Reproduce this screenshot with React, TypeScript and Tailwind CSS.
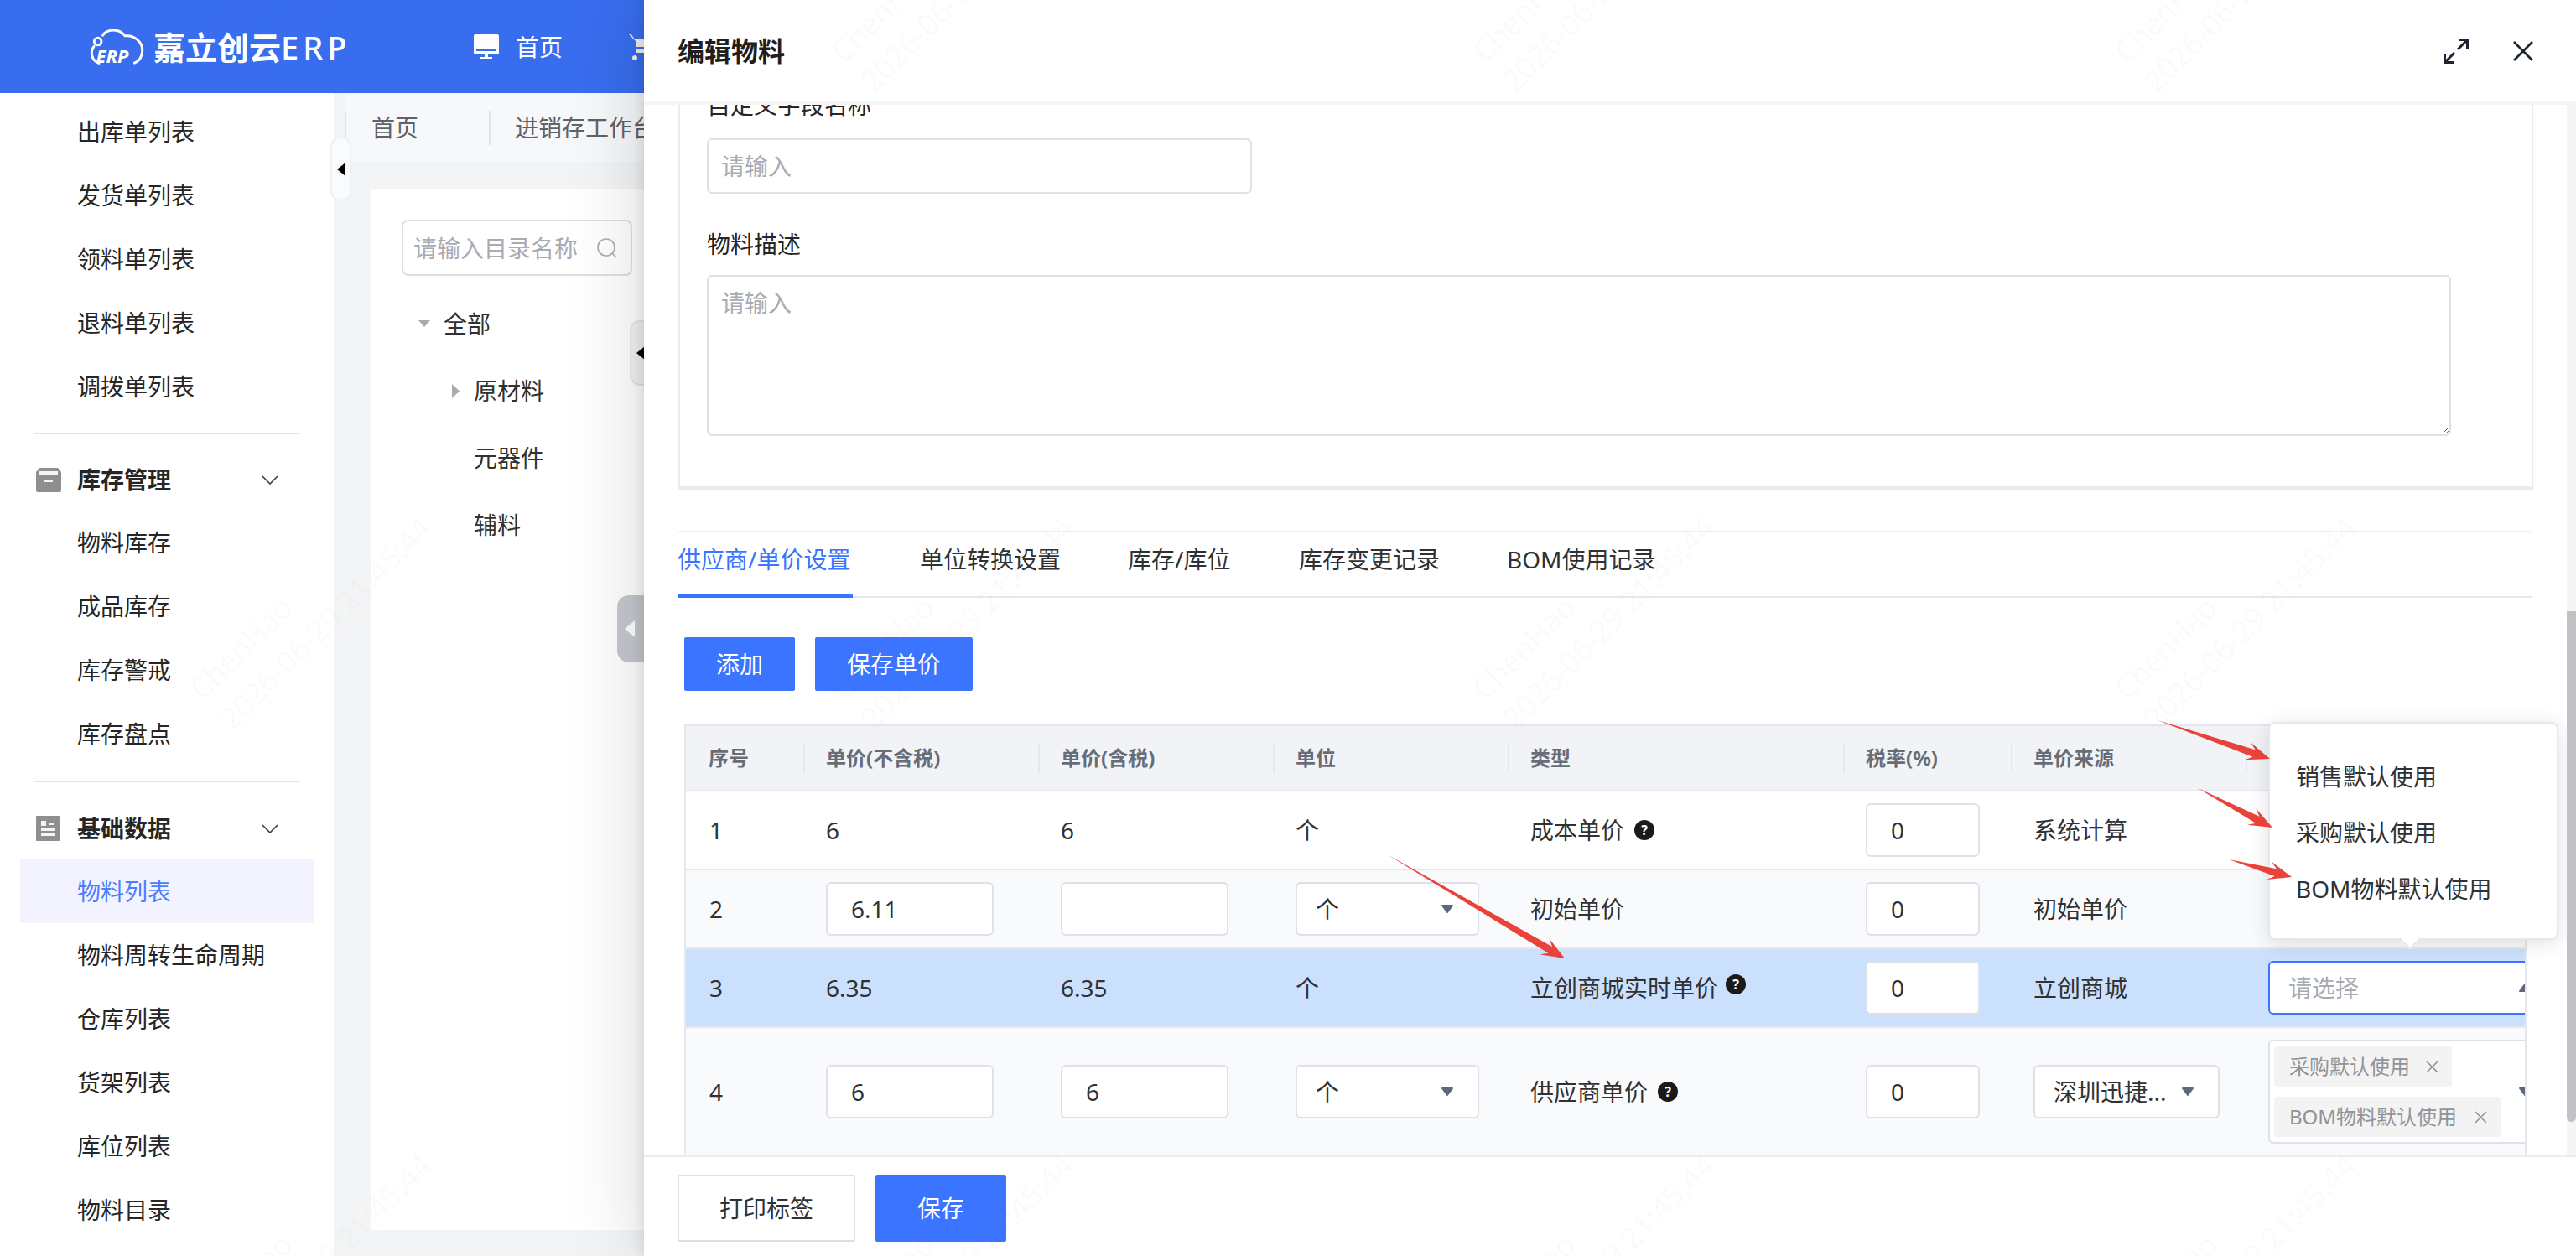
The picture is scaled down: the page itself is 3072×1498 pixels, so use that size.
import React from 'react';

const topItems = ['出库单列表', '发货单列表', '领料单列表', '退料单列表', '调拨单列表'];
const stockItems = ['物料库存', '成品库存', '库存警戒', '库存盘点'];
const baseItems = ['物料列表', '物料周转生命周期', '仓库列表', '货架列表', '库位列表', '物料目录'];
const tabs = ['供应商/单价设置', '单位转换设置', '库存/库位', '库存变更记录', 'BOM使用记录'];
const heads = ['序号', '单价(不含税)', '单价(含税)', '单位', '类型', '税率(%)', '单价来源', ''];
const gridCols = 'grid grid-cols-[140px_280px_280px_280px_400px_200px_280px_1fr]';

const arrows = [
  { x1: 2573, y1: 859, x2: 2707, y2: 905 },
  { x1: 2621, y1: 940, x2: 2710, y2: 987 },
  { x1: 2658, y1: 1025, x2: 2733, y2: 1046 },
  { x1: 1654, y1: 1019, x2: 1866, y2: 1143 },
];

function arrowPoints(a: { x1: number; y1: number; x2: number; y2: number }) {
  const dx = a.x2 - a.x1;
  const dy = a.y2 - a.y1;
  const len = Math.hypot(dx, dy);
  const ux = dx / len;
  const uy = dy / len;
  const nx = -uy;
  const ny = ux;
  const at = (back: number, side: number) =>
    `${a.x2 - ux * back + nx * side},${a.y2 - uy * back + ny * side}`;
  return [
    `${a.x1},${a.y1}`,
    at(20, 4.5),
    at(28, 11),
    `${a.x2},${a.y2}`,
    at(28, -11),
    at(20, -4.5),
  ].join(' ');
}

const SideItem = ({ label, active }: { label: string; active?: boolean }) => (
  <div
    className={`mx-[24px] flex h-[76px] w-[350px] items-center pl-[68px] text-[28px] ${
      active ? 'bg-[#f2f3ff] text-[#4e7cff]' : 'text-[#262626]'
    }`}
  >
    {label}
  </div>
);

const SideGroup = ({ label, icon }: { label: string; icon: React.ReactNode }) => (
  <div className="flex h-[74px] items-center pl-[43px] pr-[66px] text-[28px] font-bold text-[#262626]">
    <span className="flex w-[49px] shrink-0">{icon}</span>
    <span className="flex-1">{label}</span>
    <svg width="20" height="11" viewBox="0 0 20 11" fill="none" stroke="#3a3a3a" strokeWidth="1.6">
      <path d="M1 1l9 9 9-9" />
    </svg>
  </div>
);

const Caret = ({ up }: { up?: boolean }) => (
  <svg width="16" height="12" viewBox="0 0 16 12" className={up ? 'rotate-180' : ''}>
    <path d="M2 2h12L8 10z" fill="#5f6878" stroke="#5f6878" strokeWidth="2" strokeLinejoin="round" />
  </svg>
);

const Help = () => (
  <span className="flex h-[24px] w-[24px] shrink-0 items-center justify-center rounded-full bg-[#1a1a1a] text-[16px] font-bold leading-none text-white">
    ?
  </span>
);

const Field = ({ value, w }: { value?: string; w: string }) => (
  <input
    readOnly
    value={value ?? ''}
    className={`h-[64px] ${w} rounded-[6px] border-2 border-[#dfe1e8] bg-white pl-[28px] text-[28px] text-[#303133] outline-none`}
  />
);

const UnitSelect = () => (
  <div className="flex h-[64px] w-[219px] items-center justify-between rounded-[6px] border-2 border-[#dfe1e8] bg-white pl-[22px] pr-[28px] text-[28px] text-[#303133]">
    个
    <Caret />
  </div>
);

const TagX = () => (
  <svg width="15" height="15" viewBox="0 0 15 15" stroke="#8b919c" strokeWidth="1.5">
    <path d="M1 1l13 13M14 1L1 14" />
  </svg>
);

const Row = ({ className, cells }: { className: string; cells: React.ReactNode[] }) => (
  <div className={`${gridCols} border-b-2 border-[#e4e7ed] text-[28px] text-[#303133] ${className}`}>
    {cells.map((c, i) => (
      <div key={i} className={`flex items-center ${i === 0 ? 'pl-[28px]' : 'pl-[27px]'}`}>
        {c}
      </div>
    ))}
  </div>
);

export default function App() {
  const marks: { x: number; y: number }[] = [];
  [215, 980, 1745, 2510].forEach((x) => [50, 810, 1570].forEach((y) => marks.push({ x, y })));

  return (
    <div className="relative h-[1498px] w-[3072px] overflow-hidden bg-white [font-family:'Noto_Sans','Noto_Sans_CJK_SC',sans-serif]">
      {/* top bar */}
      <div className="flex h-[111px] items-center bg-[#396def] text-white">
        <div className="flex w-[565px] shrink-0 items-center pl-[106px]">
          <svg width="68" height="47" viewBox="50 38 205 140" fill="none" stroke="white" strokeWidth="9">
            <circle cx="82" cy="90" r="13" />
            <path d="M100 68c12-20 55-30 80 2 30-5 65 20 62 55-1 20-12 35-28 42" strokeLinecap="round" />
            <path d="M68 108c-14 18-10 50 18 60" strokeLinecap="round" />
            <text
              x="76"
              y="166"
              fill="white"
              stroke="none"
              fontSize="66"
              fontWeight="700"
              fontStyle="italic"
              fontFamily="'Noto Sans', sans-serif"
            >
              ERP
            </text>
          </svg>
          <span className="ml-[9px] text-[38px] font-bold leading-none whitespace-nowrap">
            嘉立创云<span className="font-medium tracking-[5px]">ERP</span>
          </span>
        </div>
        <svg width="30" height="29" viewBox="0 0 30 29" fill="white">
          <path d="M2 0h26a2 2 0 012 2v20a2 2 0 01-2 2H2a2 2 0 01-2-2V2a2 2 0 012-2z" />
          <rect x="3" y="17" width="24" height="3" fill="#396def" />
          <path d="M13 24h4v3h5v2H8v-2h5z" />
        </svg>
        <span className="ml-[20px] text-[28px]">首页</span>
        <svg className="ml-[79px]" width="40" height="32" viewBox="0 0 40 32" fill="#f2f2f2">
          <path d="M0 1l2-1 5 7h33v16H9V10L0 1zm9 15h30v3H9z" fillRule="evenodd" />
          <circle cx="7" cy="29" r="3" />
        </svg>
      </div>

      <div className="flex h-[1387px]">
        {/* side menu */}
        <div className="w-[398px] shrink-0 bg-white pt-[8px]">
          {topItems.map((t) => (
            <SideItem key={t} label={t} />
          ))}
          <div className="mx-[40px] mb-[17px] mt-[17px] h-[2px] w-[318px] bg-[#e5e5e5]" />
          <SideGroup
            label="库存管理"
            icon={
              <svg width="30" height="29" viewBox="0 0 30 29">
                <path d="M4 0h22l4 5v22a2 2 0 01-2 2H2a2 2 0 01-2-2V5z" fill="#8f8f8f" />
                <path d="M4 4h22v4H4z" fill="#f4f4f4" />
                <rect x="10" y="14" width="10" height="3" fill="#f4f4f4" />
              </svg>
            }
          />
          {stockItems.map((t) => (
            <SideItem key={t} label={t} />
          ))}
          <div className="mx-[40px] mb-[18px] mt-[18px] h-[2px] w-[318px] bg-[#e5e5e5]" />
          <SideGroup
            label="基础数据"
            icon={
              <svg width="28" height="30" viewBox="0 0 28 30">
                <rect width="28" height="30" rx="1" fill="#8f8f8f" />
                <rect x="6" y="6" width="6" height="6" fill="#f4f4f4" />
                <rect x="15" y="8" width="6" height="3" fill="#f4f4f4" />
                <rect x="6" y="15" width="16" height="3" fill="#f4f4f4" />
                <rect x="6" y="21" width="16" height="3" fill="#f4f4f4" />
              </svg>
            }
          />
          {baseItems.map((t) => (
            <SideItem key={t} label={t} active={t === '物料列表'} />
          ))}
        </div>

        {/* page behind drawer */}
        <div className="flex min-w-0 flex-1 flex-col overflow-hidden bg-[#f3f4f6]">
          <div className="ml-[13px] flex h-[82px] shrink-0 items-center bg-[#f7f8fa] text-[28px] text-[#5f6368]">
            <div className="flex h-[41px] w-[172px] items-center border-l-2 border-[#e3e4e8] pl-[30px]">首页</div>
            <div className="flex h-[41px] items-center whitespace-nowrap border-l-2 border-[#e3e4e8] pl-[29px]">
              进销存工作台
            </div>
          </div>
          <div className="ml-[44px] mt-[32px] h-[1242px] w-[1000px] shrink-0 bg-white pl-[37px] pt-[37px]">
            <div className="flex h-[67px] w-[275px] items-center justify-between rounded-[8px] border-2 border-[#dcdfe6] pl-[12px] pr-[16px] text-[28px] text-[#a8abb2]">
              <span className="whitespace-nowrap">请输入目录名称</span>
              <svg width="24" height="24" viewBox="0 0 24 24" fill="none" stroke="#a8abb2" strokeWidth="1.6">
                <circle cx="11" cy="11" r="10" />
                <path d="M18 18l5 5" />
              </svg>
            </div>
            <div className="mt-[17px] text-[28px] text-[#303133]">
              <div className="flex h-[80px] items-center pl-[20px]">
                <svg width="14" height="8" viewBox="0 0 14 8" fill="#a8abb2">
                  <path d="M0 0h14L7 8z" />
                </svg>
                <span className="ml-[16px]">全部</span>
              </div>
              <div className="flex h-[80px] items-center pl-[60px]">
                <svg width="9" height="17" viewBox="0 0 9 17" fill="#a8abb2">
                  <path d="M0 0l9 8.5L0 17z" />
                </svg>
                <span className="ml-[17px]">原材料</span>
              </div>
              <div className="flex h-[80px] items-center pl-[86px]">元器件</div>
              <div className="flex h-[80px] items-center pl-[86px]">辅料</div>
            </div>
          </div>
        </div>
      </div>

      {/* collapse handles */}
      <div className="absolute left-[394px] top-[163px] flex h-[77px] w-[25px] items-center justify-center rounded-[12px] border-2 border-[#eef0f3] bg-[#fafbfc]">
        <svg width="10" height="16" viewBox="0 0 10 16">
          <path d="M10 0v16L0 8z" fill="#000" />
        </svg>
      </div>
      <div className="absolute left-[751px] top-[382px] flex h-[78px] w-[30px] items-center rounded-[12px] border-2 border-[#e6e7ea] bg-[#f2f3f5] pl-[6px]">
        <svg width="10" height="16" viewBox="0 0 10 16">
          <path d="M10 0v16L0 8z" fill="#000" />
        </svg>
      </div>
      <div className="absolute left-[736px] top-[710px] flex h-[80px] w-[44px] items-center rounded-[14px] bg-[#c5c8ce] pl-[9px]">
        <svg width="12" height="20" viewBox="0 0 12 20">
          <path d="M12 0v20L0 10z" fill="#fff" />
        </svg>
      </div>

      {/* drawer */}
      <div className="absolute left-[768px] top-0 flex h-[1498px] w-[2304px] flex-col bg-white shadow-[-2px_0_14px_rgba(0,0,0,0.10),-12px_0_80px_rgba(0,0,0,0.13)]">
        <div className="flex h-[125px] shrink-0 items-center justify-between border-b-4 border-[#f5f5f6] pl-[40px] pr-[51px]">
          <span className="text-[32px] font-bold text-[#1f1f1f]">编辑物料</span>
          <div className="flex items-center gap-[53px]">
            <svg width="30" height="30" viewBox="0 0 30 30" fill="none" stroke="#1b2430" strokeWidth="3">
              <path d="M18 1.5h10.5V12M28.5 1.5L17 13M12 28.5H1.5V18M1.5 28.5L13 17" />
            </svg>
            <svg width="24" height="24" viewBox="0 0 24 24" fill="none" stroke="#1b2430" strokeWidth="2.6">
              <path d="M1 1l22 22M23 1L1 23" />
            </svg>
          </div>
        </div>

        <div className="relative min-h-0 flex-1 overflow-hidden">
          <div className="ml-[41px] flow-root h-[459px] w-[2212px] border-x-2 border-b-4 border-[#e9ebf0] pl-[32px]">
            <div className="-mt-[20px] h-[40px] text-[28px] leading-[40px] text-[#262626]">自定义字段名称</div>
            <input
              readOnly
              placeholder="请输入"
              className="mt-[20px] block h-[66px] w-[650px] rounded-[6px] border-2 border-[#dfe1e8] pl-[15px] text-[28px] outline-none placeholder:text-[#a8abb2]"
            />
            <div className="mt-[40px] h-[40px] text-[28px] leading-[40px] text-[#262626]">物料描述</div>
            <textarea
              readOnly
              placeholder="请输入"
              className="mt-[17px] block h-[192px] w-[2080px] rounded-[6px] border-2 border-[#dfe1e8] px-[15px] py-[11px] text-[28px] leading-[40px] outline-none placeholder:text-[#a8abb2]"
            />
          </div>

          <div className="ml-[40px] mt-[49px] flex h-[80px] w-[2212px] gap-[80px] border-y-2 border-t-[#eef0f4] border-b-[#e4e7ed] text-[28px] text-[#303133]">
            {tabs.map((t, i) => (
              <div
                key={t}
                className={`-mb-[2px] flex items-center whitespace-nowrap ${
                  i === 0 ? 'w-[209px] border-b-[5px] border-[#3b74ff] pb-[9px] text-[#3b74ff]' : 'pb-[14px]'
                } ${i === 2 ? 'w-[124px]' : ''}`}
              >
                {t}
              </div>
            ))}
          </div>

          <div className="ml-[48px] mt-[47px] flex gap-[24px] text-[28px] text-white">
            <button className="h-[64px] w-[132px] rounded-[2px] bg-[#3b74ff]">添加</button>
            <button className="h-[64px] w-[188px] rounded-[2px] bg-[#3b74ff]">保存单价</button>
          </div>

          <div className="ml-[48px] mt-[40px] w-[2197px] overflow-hidden border-x-2 border-[#e4e7ed]">
            <div className={`${gridCols} h-[80px] border-y-2 border-[#e4e7ed] bg-[#f1f3f7] text-[24px] font-bold text-[#666d79]`}>
              {heads.map((h, i) => (
                <div key={i} className="flex items-center">
                  <div
                    className={`flex h-[36px] items-center ${
                      i === 0 ? 'pl-[27px]' : 'border-l-2 border-[#e4e7ed] pl-[25px]'
                    }`}
                  >
                    {h}
                  </div>
                </div>
              ))}
            </div>

            <Row
              className="h-[94px] bg-white"
              cells={[
                '1',
                '6',
                '6',
                '个',
                <span className="flex items-center gap-[12px]">成本单价<Help /></span>,
                <Field value="0" w="w-[136px]" />,
                '系统计算',
                '',
              ]}
            />
            <Row
              className="h-[94px] bg-[#f9fafc]"
              cells={[
                '2',
                <Field value="6.11" w="w-[200px]" />,
                <Field w="w-[200px]" />,
                <UnitSelect />,
                '初始单价',
                <Field value="0" w="w-[136px]" />,
                '初始单价',
                '',
              ]}
            />
            <Row
              className="h-[94px] bg-[#cbe0fd]"
              cells={[
                '3',
                '6.35',
                '6.35',
                '个',
                <span className="flex items-center gap-[9px]">
                  立创商城实时单价
                  <span className="mb-[8px]"><Help /></span>
                </span>,
                <Field value="0" w="w-[136px]" />,
                '立创商城',
                <div className="flex h-[64px] w-[330px] shrink-0 items-center justify-between rounded-[6px] border-2 border-[#3b74ff] bg-white pl-[22px] pr-[14px] text-[#a8abb2]">
                  请选择
                  <Caret up />
                </div>,
              ]}
            />
            <Row
              className="h-[154px] bg-[#f9fafc]"
              cells={[
                '4',
                <Field value="6" w="w-[200px]" />,
                <Field value="6" w="w-[200px]" />,
                <UnitSelect />,
                <span className="flex items-center gap-[12px]">供应商单价<Help /></span>,
                <Field value="0" w="w-[136px]" />,
                <div className="flex h-[64px] w-[222px] items-center justify-between rounded-[6px] border-2 border-[#dfe1e8] bg-white pl-[22px] pr-[28px] whitespace-nowrap">
                  深圳迅捷...
                  <Caret />
                </div>,
                <div className="flex h-[124px] w-[330px] shrink-0 items-center justify-between rounded-[6px] border-2 border-[#dfe1e8] bg-white pl-[5px] pr-[14px]">
                  <div className="flex flex-col gap-[12px] text-[24px] text-[#909399]">
                    <div className="flex h-[48px] w-[212px] items-center justify-between rounded-[4px] bg-[#f3f3f3] pl-[18px] pr-[16px]">
                      采购默认使用
                      <TagX />
                    </div>
                    <div className="flex h-[48px] w-[270px] items-center justify-between rounded-[4px] bg-[#f3f3f3] pl-[18px] pr-[16px]">
                      BOM物料默认使用
                      <TagX />
                    </div>
                  </div>
                  <Caret />
                </div>,
              ]}
            />
          </div>

          {/* options popover */}
          <div className="absolute left-[1937px] top-[736px] flex h-[260px] w-[346px] flex-col rounded-[8px] border-2 border-[#e4e7ed] bg-white pl-[31px] pt-[29px] text-[28px] text-[#303133] shadow-[0_4px_24px_rgba(0,0,0,0.12)]">
            <div className="flex h-[67px] items-center">销售默认使用</div>
            <div className="flex h-[67px] items-center">采购默认使用</div>
            <div className="flex h-[67px] items-center">BOM物料默认使用</div>
            <div className="absolute left-[158px] top-[248px] h-[18px] w-[18px] rotate-45 border-b-2 border-r-2 border-[#e4e7ed] bg-white" />
          </div>

          {/* scrollbar */}
          <div className="absolute right-0 top-0 h-full w-[11px] bg-[#f5f5f5]">
            <div className="mt-[604px] h-[609px] rounded-b-full bg-[#c0c2c6]" />
          </div>
        </div>

        <div className="flex h-[120px] shrink-0 items-start gap-[24px] border-t-2 border-[#ebedf2] bg-white pl-[40px] pt-[21px] text-[28px]">
          <button className="h-[80px] w-[212px] rounded-[2px] border-2 border-[#dcdfe6] text-[#303133]">打印标签</button>
          <button className="h-[80px] w-[156px] rounded-[2px] bg-[#3b74ff] text-white">保存</button>
        </div>
      </div>

      {/* red annotation arrows */}
      <svg className="pointer-events-none absolute left-0 top-0" width="3072" height="1498">
        {arrows.map((a, i) => (
          <polygon key={i} points={arrowPoints(a)} fill="#e8423a" />
        ))}
      </svg>

      {/* watermark */}
      {marks.map((m, i) => (
        <div
          key={i}
          className="pointer-events-none absolute origin-top-left -rotate-45 whitespace-nowrap text-[36px] leading-[50px] text-[rgba(120,120,120,0.045)] [font-family:'Open_Sans',sans-serif]"
          style={{ left: m.x, top: m.y }}
        >
          ChenHao
          <br />
          2026-06-29 21:45:44
        </div>
      ))}
    </div>
  );
}
